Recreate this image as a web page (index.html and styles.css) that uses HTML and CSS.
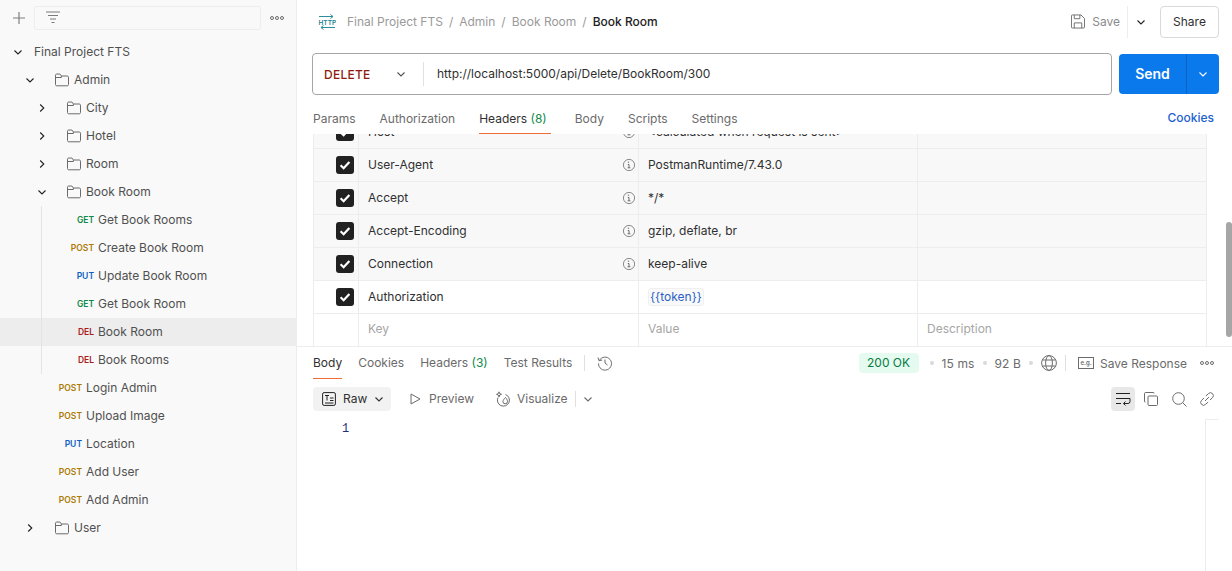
FILE: index.html
```html
<!DOCTYPE html>
<html lang="en">
<head>
<meta charset="utf-8">
<title>Book Room</title>
<link rel="stylesheet" href="styles.css">
</head>
<body>
<svg class="defs" width="0" height="0" aria-hidden="true">
  <symbol id="folder" viewBox="0 0 14 14"><path d="M.5 2.2c0-.7.5-1.2 1.2-1.2h3.2l1.5 2h5.9c.7 0 1.2.5 1.2 1.2v7.4c0 .7-.5 1.2-1.2 1.2H1.7c-.7 0-1.2-.5-1.2-1.2zM6.4 3v1.5H.5" fill="none" stroke="#6b6b6b"/></symbol>
  <symbol id="down" viewBox="0 0 10 10"><path d="M1.5 3.5 5 7l3.5-3.5" fill="none" stroke="currentColor" stroke-width="1.1"/></symbol>
  <symbol id="right" viewBox="0 0 10 10"><path d="M3.2 1.5 6.8 5 3.2 8.5" fill="none" stroke="currentColor" stroke-width="1.1"/></symbol>
  <symbol id="info" viewBox="0 0 14 14"><circle cx="7" cy="7" r="5.6" fill="none" stroke="#8a8a8a"/><path d="M5.8 4.2h1.4M5.8 6.5h1.2v3.2M5.6 9.8h2.8" fill="none" stroke="#6b6b6b"/></symbol>
  <symbol id="check" viewBox="0 0 18 18"><rect width="18" height="18" rx="3" fill="#212121"/><path d="M4.6 9.3 7.6 12.2 13.4 5.9" fill="none" stroke="#fff" stroke-width="2.2"/></symbol>
</svg>
<div class="app">
  <aside class="sidebar">
    <div class="side-top">
      <svg class="plus" width="14" height="14" viewBox="0 0 14 14"><path d="M7 1v12M1 7h12" stroke="#7f7f7f" stroke-width="1.2"/></svg>
      <div class="search">
        <svg width="14" height="13" viewBox="0 0 14 13"><path d="M0 1h14M2 4.500h10M4 8h6M5.500 11.500h3" stroke="#7a7a7a"/></svg>
      </div>
      <span class="dots"><i></i><i></i><i></i></span>
    </div>
    <ul class="tree">
      <li class="row"><svg class="chev c0" width="10" height="10"><use href="#down"/></svg><span class="name n0">Final Project FTS</span></li>
      <li class="row"><svg class="chev c1" width="10" height="10"><use href="#down"/></svg><svg class="fold f1" width="14" height="14"><use href="#folder"/></svg><span class="name">Admin</span></li>
      <li class="row"><svg class="chev c2" width="10" height="10"><use href="#right"/></svg><svg class="fold f2" width="14" height="14"><use href="#folder"/></svg><span class="name">City</span></li>
      <li class="row"><svg class="chev c2" width="10" height="10"><use href="#right"/></svg><svg class="fold f2" width="14" height="14"><use href="#folder"/></svg><span class="name">Hotel</span></li>
      <li class="row"><svg class="chev c2" width="10" height="10"><use href="#right"/></svg><svg class="fold f2" width="14" height="14"><use href="#folder"/></svg><span class="name">Room</span></li>
      <li class="row"><svg class="chev c2" width="10" height="10"><use href="#down"/></svg><svg class="fold f2" width="14" height="14"><use href="#folder"/></svg><span class="name">Book Room</span></li>
      <li class="row guide"><span class="m deep get">GET</span><span class="name">Get Book Rooms</span></li>
      <li class="row guide"><span class="m deep post">POST</span><span class="name">Create Book Room</span></li>
      <li class="row guide"><span class="m deep put">PUT</span><span class="name">Update Book Room</span></li>
      <li class="row guide"><span class="m deep get">GET</span><span class="name">Get Book Room</span></li>
      <li class="row guide active"><span class="m deep del">DEL</span><span class="name">Book Room</span></li>
      <li class="row guide"><span class="m deep del">DEL</span><span class="name">Book Rooms</span></li>
      <li class="row"><span class="m post">POST</span><span class="name">Login Admin</span></li>
      <li class="row"><span class="m post">POST</span><span class="name">Upload Image</span></li>
      <li class="row"><span class="m put">PUT</span><span class="name">Location</span></li>
      <li class="row"><span class="m post">POST</span><span class="name">Add User</span></li>
      <li class="row"><span class="m post">POST</span><span class="name">Add Admin</span></li>
      <li class="row"><svg class="chev c1" width="10" height="10"><use href="#right"/></svg><svg class="fold f1" width="14" height="14"><use href="#folder"/></svg><span class="name">User</span></li>
    </ul>
  </aside>
  <main class="main">
    <header class="crumbbar">
      <svg class="http" width="18" height="18" viewBox="0 0 18 18"><path d="M1 3.500h14M12.500 1.500l2.500 2-2.500 2M17 14.500H3M5.500 12.500l-2.500 2 2.500 2" fill="none" stroke="#2b8f9b"/><text x="0.500" y="11.500" font-size="6.500" font-family="Inter" font-weight="600" fill="#1f7f8c">HTTP</text></svg>
      <nav class="crumbs"><span>Final Project FTS</span><b>/</b><span>Admin</span><b>/</b><span>Book Room</span><b>/</b><strong>Book Room</strong></nav>
      <div class="save">
        <svg width="14" height="15" viewBox="0 0 15 15"><path d="M.5 1.500a1 1 0 0 1 1-1h9.200l3.800 3.800v9.200a1 1 0 0 1-1 1h-12a1 1 0 0 1-1-1zM3.500.5v4h6v-4M3.500 14.500v-5.500h8v5.500" fill="none" stroke="#6b6b6b"/></svg>
        <span>Save</span>
      </div>
      <div class="save-more"><svg width="10" height="10"><use href="#down"/></svg></div>
      <button class="share">Share</button>
    </header>
    <section class="urlrow">
      <div class="urlbox">
        <span class="verb">DELETE</span>
        <svg class="verb-chev" width="10" height="10"><use href="#down"/></svg>
        <span class="url">http://localhost:5000/api/Delete/BookRoom/300</span>
      </div>
      <div class="send"><span>Send</span><i><svg width="10" height="10"><use href="#down"/></svg></i></div>
    </section>
    <nav class="reqtabs">
      <a>Params</a><a>Authorization</a><a class="on">Headers <em>(8)</em></a><a>Body</a><a>Scripts</a><a>Settings</a>
      <span class="cookies">Cookies</span>
    </nav>
    <section class="tablewrap">
      <div class="table">
        <div class="tr grey"><div class="td cb"><svg width="18" height="18"><use href="#check"/></svg></div><div class="td key">Host<svg width="14" height="14"><use href="#info"/></svg></div><div class="td val">&lt;calculated when request is sent&gt;</div><div class="td desc"></div></div>
        <div class="tr grey"><div class="td cb"><svg width="18" height="18"><use href="#check"/></svg></div><div class="td key">User-Agent<svg width="14" height="14"><use href="#info"/></svg></div><div class="td val">PostmanRuntime/7.43.0</div><div class="td desc"></div></div>
        <div class="tr grey"><div class="td cb"><svg width="18" height="18"><use href="#check"/></svg></div><div class="td key">Accept<svg width="14" height="14"><use href="#info"/></svg></div><div class="td val">*/*</div><div class="td desc"></div></div>
        <div class="tr grey"><div class="td cb"><svg width="18" height="18"><use href="#check"/></svg></div><div class="td key">Accept-Encoding<svg width="14" height="14"><use href="#info"/></svg></div><div class="td val">gzip, deflate, br</div><div class="td desc"></div></div>
        <div class="tr grey"><div class="td cb"><svg width="18" height="18"><use href="#check"/></svg></div><div class="td key">Connection<svg width="14" height="14"><use href="#info"/></svg></div><div class="td val">keep-alive</div><div class="td desc"></div></div>
        <div class="tr"><div class="td cb"><svg width="18" height="18"><use href="#check"/></svg></div><div class="td key">Authorization</div><div class="td val"><span class="var">{{token}}</span></div><div class="td desc"></div></div>
        <div class="tr ph"><div class="td cb"></div><div class="td key">Key</div><div class="td val">Value</div><div class="td desc">Description</div></div>
      </div>
      <div class="thumb"></div>
    </section>
    <section class="response">
      <div class="restabs">
        <a class="on">Body</a><a>Cookies</a><a>Headers <em>(3)</em></a><a>Test Results</a>
        <span class="vr r1"></span>
        <svg class="hist" width="16" height="16" viewBox="0 0 16 16"><path d="M2.300 5.500A6.500 6.500 0 1 1 1.500 8.500M1 2.500l1 3.200 3.200-.7M8 4.500V8l2.500 2" fill="none" stroke="#6b6b6b"/></svg>
        <span class="status">200 OK</span>
        <i class="dot"></i><span class="meta">15 ms</span><i class="dot"></i><span class="meta">92 B</span><i class="dot"></i>
        <svg class="globe" width="16" height="16" viewBox="0 0 16 16"><g fill="none" stroke="#6b6b6b"><circle cx="8" cy="8" r="7.400"/><ellipse cx="8" cy="8" rx="3.400" ry="7.400"/><path d="M1.500 5h13M1.500 11h13"/></g></svg>
        <span class="vr r2"></span>
        <svg class="eg" width="16" height="12" viewBox="0 0 16 12"><rect x=".5" y=".5" width="15" height="11" fill="none" stroke="#6b6b6b"/><text x="2.500" y="8" font-size="6" font-family="Inter" font-weight="600" fill="#6b6b6b">e.g.</text></svg>
        <span class="saveresp">Save Response</span>
        <span class="dots"><i></i><i></i><i></i></span>
      </div>
      <div class="tools">
        <div class="raw">
          <svg width="14" height="14" viewBox="0 0 14 14"><rect x=".6" y=".6" width="12.800" height="12.800" rx="1.500" fill="none" stroke="#212121"/><path d="M3 3.500h4M5 3.500v5M8 6h3.500M8 8.500h3.500M3 11h8.500" stroke="#212121" fill="none"/></svg>
          <span>Raw</span>
          <svg width="10" height="10"><use href="#down"/></svg>
        </div>
        <div class="tool t-prev"><svg width="11" height="12" viewBox="0 0 11 12"><path d="M1 1l9 5-9 5z" fill="none" stroke="#6b6b6b"/></svg><span>Preview</span></div>
        <div class="tool t-vis"><svg width="16" height="16" viewBox="0 0 16 16"><g fill="none" stroke="#6b6b6b"><path d="M10.500 3.500A6 6 0 1 1 3 6.500"/><path d="M10.500 6.500c1.500 1.800 2 3 2 4a2.300 2.300 0 0 1-4.600 0c0-1 1-2.500 2.600-4z"/><path d="M4 .8l.7 1.800 1.800.7-1.800.7L4 6l-.7-2-1.800-.7 1.800-.7z"/></g></svg><span>Visualize</span></div>
        <span class="vr r3"></span>
        <svg class="vis-chev" width="10" height="10"><use href="#down"/></svg>
        <div class="wrapbtn"><svg width="16" height="14" viewBox="0 0 16 14"><path d="M1 1.500h14M1 6.500h14M1 11.500h5M15 6.500v3a2 2 0 0 1-2 2H8.500M10.500 9.500l-2 2 2 2" fill="none" stroke="#212121"/></svg></div>
        <svg class="ic copy" width="14" height="14" viewBox="0 0 14 14"><g fill="none" stroke="#6b6b6b"><rect x="4" y="4" width="9.500" height="9.500" rx="1"/><path d="M10 1.500V1a.5.5 0 0 0-.5-.5H1.500a1 1 0 0 0-1 1V9.500a.5.5 0 0 0 .5.5h.5"/></g></svg>
        <svg class="ic find" width="15" height="15" viewBox="0 0 15 15"><g fill="none" stroke="#6b6b6b"><circle cx="6.500" cy="6.500" r="5.800"/><path d="M10.800 10.800l3.700 3.700"/></g></svg>
        <svg class="ic link" width="14" height="14" viewBox="0 0 14 14"><g fill="none" stroke="#6b6b6b"><path d="M5.800 4 8.500 1.600a2.800 2.800 0 0 1 4 4L10 8"/><path d="M8.200 10 5.500 12.400a2.800 2.800 0 0 1-4-4L4 6"/><path d="M9 5 5 9"/></g></svg>
      </div>
      <div class="editor">
        <span class="ln">1</span>
        <div class="gutter"></div>
      </div>
    </section>
  </main>
</div>
</body>
</html>
```
FILE: styles.css
```css
* { box-sizing: border-box; }
html, body { margin: 0; height: 100%; overflow: hidden; }
body { font-family: Inter, "Noto Sans", sans-serif; font-size: 12px; color: #212121; background: #fff; }
.defs { position: absolute; }
ul { list-style: none; margin: 0; padding: 0; }
.app { display: flex; height: 571px; }

.sidebar { width: 297px; flex: none; background: #f9f9f9; border-right: 1px solid #ededed; }
.side-top { display: flex; align-items: center; height: 38px; padding: 0 0 2px 12px; }
.plus { flex: none; margin-right: 8px; }
.search { width: 227px; height: 24px; border: 1px solid #ededed; border-radius: 3px; padding: 4px 0 0 11px; background: #f9f9f9; }
.search svg { display: block; }
.dots { display: inline-flex; gap: 1px; }
.dots i { width: 4px; height: 4px; border: 1px solid #6b6b6b; border-radius: 50%; display: block; }
.side-top .dots { margin-left: 9px; }
.row { position: relative; display: flex; align-items: center; height: 28px; color: #505050; }
.name { white-space: nowrap; padding-bottom: 2px; }
.chev { flex: none; color: #212121; }
.c0 { margin-left: 13px; margin-right: 11px; }
.c1 { margin-left: 25px; margin-right: 20px; }
.c2 { margin-left: 37px; margin-right: 20px; }
.fold { flex: none; margin-right: 5px; }
.m { width: 82px; flex: none; text-align: right; font-size: 8.500px; font-weight: 600; margin-right: 4px; padding-bottom: 1px; }
.m.deep { width: 94px; }
.get { color: #0f8a4b; }
.post { color: #ad7a03; }
.put { color: #0d5fc4; }
.del { color: #a81e1e; }
.guide::before { content: ""; position: absolute; left: 41px; top: 0; bottom: 0; width: 1px; background: #e4e4e4; }
.active { background: #ededed; }

.main { flex: 1; min-width: 0; display: flex; flex-direction: column; }
.crumbbar { display: flex; align-items: center; height: 44px; padding: 0 13px 0 21px; flex: none; }
.http { flex: none; margin-right: 11px; }
.crumbs { display: flex; gap: 6px; flex: 1; color: #9a9a9a; margin-bottom: 1px; }
.crumbs b { font-weight: 400; }
.crumbs strong { color: #212121; font-weight: 500; }
.save { display: flex; align-items: center; gap: 7px; color: #8a8a8a; height: 32px; padding: 0 7px 1px 0; border-right: 1px solid #ededed; }
.save-more { width: 32px; padding-right: 6px; display: flex; justify-content: center; color: #212121; }
.save-more svg, .send svg { display: block; }
.share { width: 59px; height: 32px; border: 1px solid #d9d9d9; border-radius: 4px; background: #fff; font: inherit; color: #303030; padding: 0 0 1px; }

.urlrow { display: flex; gap: 7px; height: 42px; margin: 9px 13px 0 15px; flex: none; }
.urlbox { flex: 1; display: flex; align-items: center; border: 1px solid #a6a6a6; border-radius: 4px; }
.verb { width: 83px; padding-left: 11px; color: #8e1a10; font-weight: 500; letter-spacing: .02em; }
.verb-chev { color: #505050; margin-right: 17px; }
.url { border-left: 1px solid #e0e0e0; height: 24px; line-height: 24px; padding-left: 13px; color: #303030; }
.send { width: 100px; height: 40px; margin-top: 1px; background: #0a79ec; border-radius: 4px; color: #fff; font-size: 14px; font-weight: 600; display: flex; align-items: center; }
.send span { width: 67px; text-align: center; padding-bottom: 1px; }
.send i { flex: 1; height: 100%; display: flex; align-items: center; justify-content: center; border-left: 1px solid #0a62c0; }

.reqtabs { display: flex; height: 39px; padding: 9px 18px 0 16px; flex: none; align-items: stretch; color: #6b6b6b; }
.reqtabs a { display: flex; align-items: center; height: 30px; padding-bottom: 2px; white-space: nowrap; margin-right: 24px; }
.reqtabs a.on { color: #303030; border-bottom: 1px solid #f26b3a; padding: 0 4px 1px 0; display: block; line-height: 29px; }
.reqtabs em, .restabs em { font-style: normal; color: #0f8a4b; }
.cookies { margin-left: auto; color: #1d5fd0; font-weight: 500; line-height: 28px; }

.tablewrap { position: relative; height: 213px; overflow: hidden; flex: none; border-bottom: 1px solid #ededed; }
.table { margin: -18px 0 0 16px; width: 894px; border-left: 1px solid #ededed; border-right: 1px solid #ededed; }
.tr { display: flex; height: 33px; border-bottom: 1px solid #ededed; color: #303030; }
.tr.grey { background: #f8f8f8; }
.td { display: flex; align-items: center; height: 100%; padding-bottom: 2px; }
.cb { width: 45px; border-right: 1px solid #ededed; padding: 0 0 0 22px; }
.cb svg { display: block; }
.key { width: 280px; border-right: 1px solid #ededed; padding-left: 9px; padding-right: 2px; justify-content: space-between; }
.key svg { margin-top: 2px; }
.val { width: 279px; border-right: 1px solid #ededed; padding-left: 9px; }
.desc { flex: 1; padding-left: 9px; }
.ph { color: #a6a6a6; }
.ph .key, .ph .val, .ph .desc { padding-bottom: 4px; }
.var { color: #2b5fc7; background: #f9f9f9; border: 1px solid #f0f0f0; border-radius: 3px; padding: 0 1px; line-height: 16px; margin-top: 2px; }
.thumb { position: absolute; left: 929px; top: 88px; width: 6px; height: 115px; border-radius: 3px; background: #a6a6a6; }

.response { flex: 1; display: flex; flex-direction: column; min-height: 0; padding-left: 16px; }
.restabs { display: flex; align-items: center; height: 33px; padding-right: 18px; padding-bottom: 1px; color: #6b6b6b; flex: none; }
.restabs a { margin-right: 16px; line-height: 31px; height: 32px; white-space: nowrap; }
.restabs a.on { color: #303030; border-bottom: 1px solid #f26b3a; }
.vr { width: 1px; height: 16px; background: #e0e0e0; flex: none; display: block; }
.r1 { margin-left: -4px; }
.hist { margin-left: 12px; margin-right: auto; flex: none; }
.status { width: 60px; height: 20px; line-height: 20px; margin-right: 3px; background: #e6fbf0; color: #067a43; font-size: 12px; text-align: center; border-radius: 4px; }
.dot { width: 4px; height: 4px; border-radius: 50%; background: #d9d9d9; margin: 0 8px; flex: none; }
.meta { color: #6b6b6b; letter-spacing: .01em; }
.globe { flex: none; }
.r2 { margin: 0 12px 0 8px; }
.eg { flex: none; margin-right: 6px; }
.saveresp { color: #6b6b6b; margin-right: 13px; white-space: nowrap; }

.tools { display: flex; align-items: center; height: 24px; margin-top: 7px; padding-right: 18px; color: #6b6b6b; flex: none; }
.raw { display: flex; align-items: center; width: 78px; height: 24px; padding-left: 9px; background: #f2f2f2; border-radius: 4px; color: #303030; }
.raw span { margin: 0 7px; padding-bottom: 2px; }
.tool { display: flex; align-items: center; }
.tool span { padding-bottom: 2px; }
.t-prev { margin-left: 19px; gap: 8px; }
.t-vis { margin-left: 21px; gap: 6px; }
.r3 { margin-left: 7px; }
.vis-chev { margin: 0 auto 0 7px; }
.wrapbtn { width: 24px; height: 24px; background: #e8e8e8; border-radius: 4px; display: flex; align-items: center; justify-content: center; }
.ic { flex: none; }
.copy { margin-left: 9px; }
.find { margin-left: 14px; }
.link { margin-left: 13px; }

.editor { position: relative; flex: 1; display: flex; padding: 10px 0 0 29px; }
.ln { font-family: "Liberation Mono", monospace; font-size: 12px; color: #1f2f7a; line-height: 16px; }
.gutter { position: absolute; left: 892px; top: 8px; bottom: 0; width: 14px; border-left: 1px solid #ededed; border-top: 1px solid #ededed; }
```
